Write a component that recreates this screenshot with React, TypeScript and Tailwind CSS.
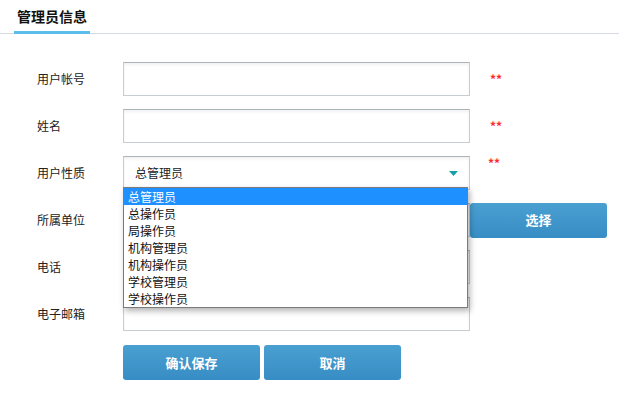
import React from "react"

const font = { fontFamily: '"Microsoft YaHei", "Noto Sans CJK SC", "Liberation Sans", sans-serif' }

const options = ["总管理员", "总操作员", "局操作员", "机构管理员", "机构操作员", "学校管理员", "学校操作员"]

function TextBox() {
    return (
        <div className="h-[34px] w-[347px] border border-[#c5ced4] border-t-[#a9b4bb] bg-white shadow-[inset_0_2px_3px_rgba(0,0,0,0.06)]" />
    )
}

function Star({ className = "" }: { className?: string }) {
    return <span className={"ml-5 text-[12px] font-bold leading-none text-[#ff2a2a] " + className}>**</span>
}

function Row({ label, children }: { label: string; children: React.ReactNode }) {
    return (
        <div className="flex h-[34px] items-center">
            <div className="w-[86px] text-[12px] text-[#222]">{label}</div>
            {children}
        </div>
    )
}

function BlueButton({ label, className = "" }: { label: string; className?: string }) {
    return (
        <button className={"flex h-[35px] w-[137px] items-center justify-center rounded-[3px] bg-gradient-to-b from-[#4a9fd1] to-[#378ec4] text-[13px] font-bold text-white " + className}>
            {label}
        </button>
    )
}

export default function App() {
    return (
        <div className="h-[396px] w-[619px] bg-white" style={font}>
            <div className="flex h-[34px] items-end border-b border-[#d5dbe0] pl-[14px]">
                <div className="-mb-px h-[34px] w-[76px] border-b-[3px] border-[#5bbde9] pl-[3px] pt-[6px] text-[14px] font-bold text-[#111]">
                    管理员信息
                </div>
            </div>

            <div className="flex flex-col gap-[13px] pl-[37px] pt-[28px]">
                <Row label="用户帐号">
                    <TextBox />
                    <Star />
                </Row>
                <Row label="姓名">
                    <TextBox />
                    <Star />
                </Row>
                <Row label="用户性质">
                    <div className="relative">
                        <div className="flex h-[34px] w-[347px] items-center justify-between border border-[#c5ced4] border-t-[#a9b4bb] bg-white pl-[11px] pr-[11px] text-[12px] text-[#222] shadow-[inset_0_2px_3px_rgba(0,0,0,0.06)]">
                            <span>总管理员</span>
                            <svg width="9" height="6" viewBox="0 0 9 6" className="mt-[2px]">
                                <polygon points="0,0 9,0 4.5,5" fill="#14a0a8" />
                            </svg>
                        </div>
                        <div className="absolute left-0 top-[31px] z-10 w-[345px] border border-[#7b7b7b] bg-white shadow-[2px_3px_6px_rgba(0,0,0,0.3)]">
                            {options.map((o, i) => (
                                <div
                                    key={o}
                                    className={
                                        "h-[17px] pl-[4px] text-[12px] leading-[17px] " +
                                        (i === 0 ? "bg-[#1e90ff] text-white" : "text-[#111]")
                                    }
                                >
                                    {o}
                                </div>
                            ))}
                        </div>
                    </div>
                    <Star className="-mt-[20px] ml-[18px]" />
                </Row>
                <Row label="所属单位">
                    <TextBox />
                    <BlueButton label="选择" />
                </Row>
                <Row label="电话">
                    <TextBox />
                </Row>
                <Row label="电子邮箱">
                    <TextBox />
                </Row>
                <div className="flex gap-[4px] pl-[86px] pt-[1px]">
                    <BlueButton label="确认保存" />
                    <BlueButton label="取消" />
                </div>
            </div>
        </div>
    )
}
